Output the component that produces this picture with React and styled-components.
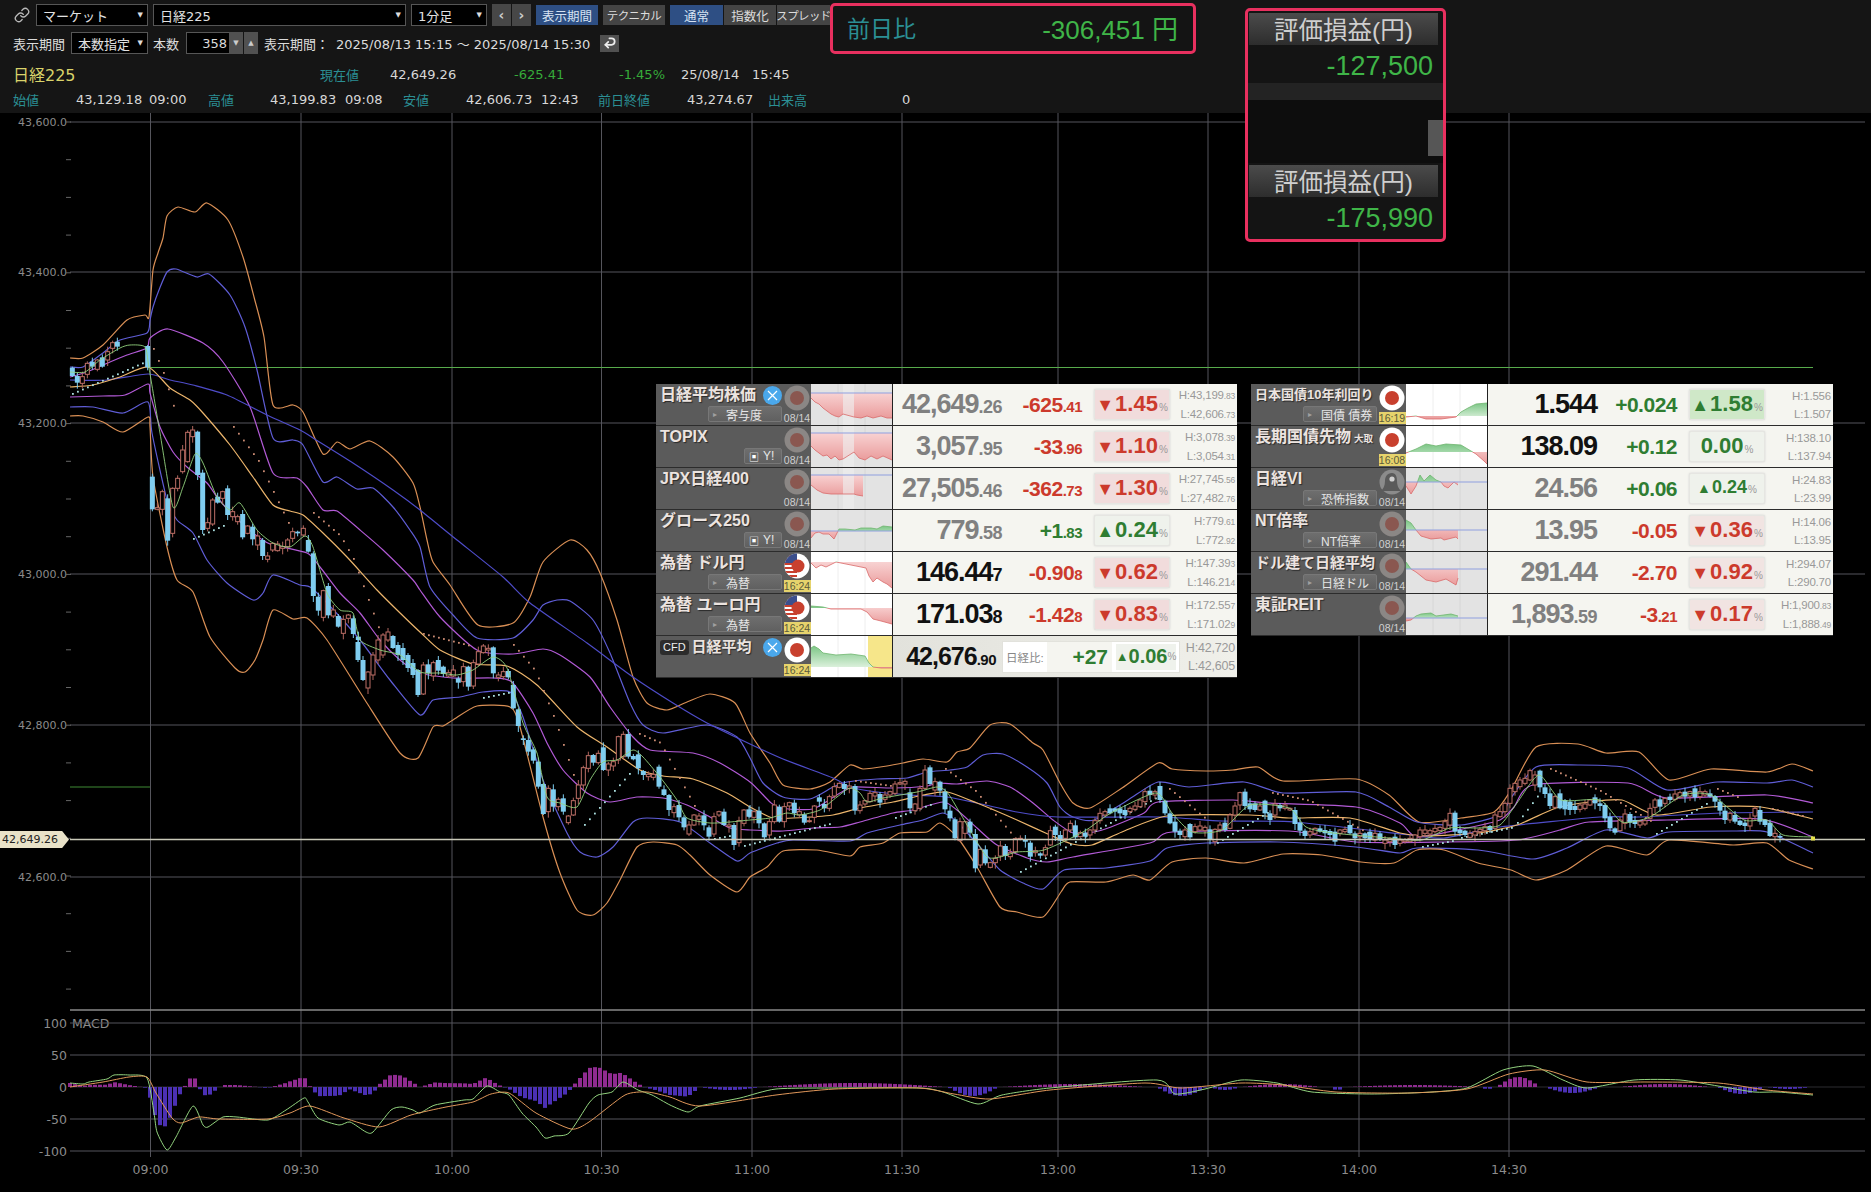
import React from 'react';
import styled, { createGlobalStyle } from 'styled-components';
import { Link as LinkIcon, Undo2 } from 'lucide-react';

const SANS = '"DejaVu Sans", "Noto Sans CJK JP", sans-serif';
const ARIAL = '"Liberation Sans", "Noto Sans CJK JP", sans-serif';

// chart data, all in page pixels
const OU = [[70,358],[83,358],[103,345],[127,320],[145,315],[149,317],[153,270],[158,253],[163,238],[167,216],[178,207],[195,212],[207,203],[228,220],[243,257],[254,297],[264,337],[273,405],[293,405],[303,412],[323,454],[337,442],[350,449],[370,441],[393,457],[413,483],[420,507],[427,540],[433,562],[450,585],[478,625],[513,623],[530,597],[543,562],[570,540],[587,550],[600,573],[617,620],[633,677],[647,703],[667,710],[687,702],[710,694],[735,703],[750,733],[770,763],[783,785],[810,789],[830,782],[850,765],[863,769],[887,766],[903,763],[923,759],[947,762],[957,752],[970,748],[990,725],[1010,724],[1033,743],[1043,750],[1060,783],[1073,803],[1090,808],[1122,788],[1158,763],[1172,769],[1206,771],[1233,770],[1258,767],[1283,781],[1356,779],[1389,795],[1419,822],[1461,818],[1494,812],[1511,790],[1536,747],[1578,744],[1606,753],[1639,752],[1669,780],[1711,769],[1767,772],[1792,764],[1813,771]];
const BU = [[70,367],[83,367],[103,353],[120,340],[147,333],[150,320],[153,307],[159,290],[167,272],[176,269],[197,277],[209,274],[230,295],[245,327],[257,370],[273,438],[293,440],[303,445],[323,482],[337,477],[357,489],[373,488],[393,507],[410,530],[420,547],[430,587],[453,615],[477,638],[513,638],[533,620],[543,605],[557,600],[570,601],[593,620],[610,653],[630,703],[643,725],[663,733],[707,725],[737,737],[750,758],[763,783],[783,797],[810,799],[833,787],[847,782],[877,779],[907,778],[927,772],[950,770],[967,767],[983,755],[1003,754],[1027,767],[1047,783],[1060,807],[1073,817],[1094,820],[1128,800],[1158,782],[1189,787],[1244,782],[1283,793],[1356,792],[1389,807],[1417,822],[1461,825],[1500,815],[1511,798],[1536,767],[1578,765],[1628,768],[1667,790],[1717,782],[1767,783],[1792,780],[1813,787]];
const PU = [[70,377],[87,372],[110,362],[127,355],[147,348],[150,338],[168,329],[203,343],[223,362],[250,407],[273,473],[297,478],[307,487],[323,510],[337,511],[360,530],[383,550],[413,580],[420,590],[440,617],[477,650],[513,654],[543,649],[560,655],[590,677],[610,707],[633,737],[650,750],[693,753],[720,763],[750,782],[770,802],[780,808],[813,809],[840,793],[853,787],[893,788],[927,786],[937,783],[957,784],[987,781],[1010,787],[1033,803],[1053,820],[1073,833],[1094,832],[1111,827],[1144,813],[1158,802],[1233,800],[1267,803],[1356,807],[1400,823],[1417,837],[1467,828],[1500,820],[1514,807],[1533,785],[1628,783],[1667,798],[1767,795],[1813,803]];
const MU = [[70,380],[107,380],[148,374],[170,380],[193,385],[227,395],[267,415],[300,430],[313,438],[353,463],[393,490],[420,510],[457,540],[503,577],[530,603],[587,643],[633,677],[673,703],[707,723],[750,744],[783,759],[833,778],[850,787],[877,792],[910,795],[947,797],[977,803],[1017,812],[1058,817],[1161,817],[1222,821],[1294,822],[1411,835],[1444,838],[1500,827],[1600,817],[1639,817],[1722,813],[1813,812]];
const OE = [[70,387],[93,385],[120,377],[148,367],[170,388],[190,400],[203,413],[230,445],[253,477],[273,505],[290,511],[303,515],[323,533],[347,557],[377,590],[397,610],[420,632],[440,650],[473,664],[507,666],[537,685],[577,727],[607,747],[640,770],[663,776],[693,779],[727,793],[750,807],[773,818],[793,818],[833,815],[860,808],[893,802],[923,795],[947,792],[977,803],[1017,820],[1050,835],[1072,844],[1092,845],[1122,832],[1167,816],[1250,815],[1289,818],[1350,818],[1400,833],[1428,836],[1478,833],[1517,825],[1556,808],[1589,802],[1622,800],[1656,815],[1711,807],[1761,807],[1813,819]];
const PL = [[70,397],[103,396],[125,395],[148,384],[150,393],[160,427],[173,452],[187,467],[207,483],[217,497],[230,512],[253,533],[270,544],[307,553],[320,567],[340,593],[360,613],[380,640],[400,660],[420,673],[453,678],[493,678],[512,682],[533,713],[547,743],[563,770],[587,793],[610,802],[637,797],[663,798],[687,805],[710,817],[730,828],[750,830],[783,831],[813,828],[840,827],[860,822],[893,813],[913,810],[943,802],[957,810],[977,828],[997,845],[1027,858],[1047,862],[1073,857],[1150,843],[1172,832],[1289,831],[1356,842],[1444,842],[1517,840],[1560,830],[1589,822],[1667,820],[1761,819],[1813,837]];
const BL = [[70,407],[93,407],[123,413],[148,402],[152,433],[167,500],[177,520],[193,533],[207,560],[227,583],[253,600],[263,593],[273,575],[300,585],[310,587],[327,603],[360,640],[390,680],[420,715],[433,700],[460,697],[483,692],[510,692],[523,717],[543,780],[567,833],[580,852],[597,857],[613,847],[633,822],[647,818],[680,822],[710,843],[737,861],[750,853],[777,843],[793,840],[850,841],[867,833],[900,825],[923,820],[943,813],[957,822],[980,847],[1000,870],[1023,883],[1043,889],[1064,870],[1106,868],[1150,861],[1167,848],[1206,843],[1278,842],[1356,847],[1400,853],[1417,848],[1478,850],[1533,859],[1567,848],[1606,830],[1647,838],[1669,832],[1733,831],[1767,832],[1813,853]];
const OL = [[70,416],[83,416],[103,422],[123,432],[148,417],[150,427],[153,477],[167,547],[177,580],[193,592],[210,637],[235,668],[245,672],[255,660],[263,640],[273,610],[293,619],[307,618],[327,640],[365,700],[400,753],[418,758],[433,727],[443,726],[453,720],[477,706],[510,707],[520,727],[543,817],[560,873],[577,910],[593,915],[607,903],[620,880],[637,847],[653,842],[677,845],[690,855],[710,875],[737,892],[750,877],[767,867],[783,851],[817,850],[850,856],[860,847],[883,843],[900,833],[927,832],[940,823],[957,837],[977,867],[1000,907],[1017,912],[1043,917],[1061,892],[1070,882],[1106,882],[1133,875],[1150,880],[1172,862],[1206,858],[1244,863],[1283,854],[1322,855],[1361,862],[1394,863],[1417,850],[1444,850],[1478,863],[1511,870],[1536,880],[1567,870],[1606,846],[1647,855],[1669,840],[1733,845],[1767,843],[1789,860],[1813,869]];
const GR = [[70,372],[85,372],[100,360],[120,348],[130,345],[145,347],[149,368],[160,433],[173,507],[183,487],[195,454],[203,463],[217,497],[230,510],[240,503],[257,530],[273,543],[290,547],[305,536],[313,547],[327,593],[340,610],[353,613],[360,640],[380,650],[400,655],[420,672],[440,673],[457,675],[473,670],[493,657],[507,668],[523,723],[537,753],[547,797],[560,803],[577,807],[590,780],[603,762],[617,760],[633,750],[643,757],[660,777],[677,800],[687,818],[710,823],[730,822],[750,820],[770,818],[787,813],[800,815],[820,810],[837,797],[850,788],[860,793],[867,802],[883,798],[917,792],[937,787],[947,792],[960,813],[973,835],[987,857],[1000,857],[1017,852],[1044,850],[1083,832],[1111,813],[1156,793],[1172,813],[1192,832],[1222,830],[1250,805],[1289,808],[1306,827],[1333,833],[1389,838],[1422,840],[1450,828],[1478,828],[1500,825],[1517,803],[1539,775],[1561,800],[1600,800],[1622,822],[1650,817],[1683,795],[1711,795],[1744,820],[1767,820],[1783,835],[1813,837]];

// [x, top, bottom, hollow] in the scale of each block below
const CANDLES_A = [[37,143,168,0],[52,168,188,0],[67,170,190,1],[82,130,163,1],[97,125,140,0],[112,120,148,1],[127,112,140,0],[143,95,120,1],[158,68,85,1],[172,65,80,0],[263,78,142,0],[277,470,568,0],[292,563,568,1],[307,515,568,1],[323,535,662,0],[338,505,640,1],[353,475,505,1],[368,390,455,1],[383,337,425,1],[398,330,350,1],[413,335,465,0],[428,458,630,0],[443,608,625,1],[458,540,612,1],[473,530,548,0],[488,515,535,1],[503,505,585,0],[518,575,590,1],[533,590,605,1],[548,582,652,0],[563,618,640,1],[578,620,658,0],[593,648,675,1],[608,660,708,0],[623,708,718,1],[638,670,690,1],[653,672,692,1],[668,680,685,1],[683,660,680,1],[698,635,655,1],[713,635,640,0],[730,625,645,1],[745,660,695,0],[760,700,828,0],[775,830,872,0],[790,812,892,1],[805,798,886,0],[820,870,888,1],[835,888,920,0],[850,898,940,1],[865,885,895,1],[880,895,942,0],[895,950,960,0]];
const CANDLES_REAL = [[358,642,660,0],[363,660,680,0],[368,672,688,1],[373,655,675,1],[378,640,660,1],[383,635,655,1],[388,632,640,1],[393,636,648,0],[398,645,655,0],[403,648,660,0],[408,655,668,0],[413,663,675,0],[418,670,695,0]];
const CANDLES_B = [[10,375,462,1],[25,373,400,0],[40,368,408,1],[55,360,392,0],[70,380,402,0],[85,398,408,1],[100,390,408,1],[115,415,428,0],[130,380,425,1],[145,380,440,0],[160,368,438,1],[175,335,372,1],[190,318,338,1],[205,325,330,1],[220,322,400,0],[235,405,412,1],[250,395,410,1],[265,393,412,0],[280,435,505,0],[295,508,558,0],[310,595,600,0],[325,600,635,0],[340,628,662,0],[355,665,740,0],[370,732,822,0],[385,745,815,1],[400,748,800,0],[415,778,800,1],[430,775,815,0],[445,828,848,1],[460,782,825,1],[475,735,775,1],[490,683,735,1],[505,647,685,1],[520,645,668,0],[535,640,668,1],[550,622,690,0],[565,672,690,1],[580,665,678,1],[595,590,660,1],[610,583,650,1],[625,582,650,0],[640,648,658,0],[655,643,685,0],[670,693,705,0],[685,703,710,1],[700,703,712,1],[717,680,740,0],[732,748,765,0],[747,765,810,0],[762,800,818,1],[777,795,832,0],[792,832,862,0],[807,855,882,1],[822,825,855,1],[837,828,838,1],[852,826,856,0],[867,862,890,0],[882,830,882,1],[897,815,825,1],[912,815,855,0],[927,855,860,1],[942,855,915,0],[957,842,908,1],[972,810,850,1],[987,808,830,0]];
const CANDLES_C = [[0,390,410,0],[12,395,412,1],[27,392,430,0],[43,430,472,0],[58,425,465,1],[73,375,425,1],[88,380,425,0],[103,380,425,1],[118,368,378,1],[133,368,400,0],[148,395,405,1],[163,403,428,0],[178,422,425,1],[193,378,412,1],[208,352,365,0],[223,372,385,0],[238,350,385,1],[253,320,348,1],[268,310,322,1],[283,312,327,0],[298,318,325,1],[315,318,392,0],[330,375,392,1],[345,362,372,1],[360,340,365,1],[375,338,348,1],[390,342,368,0],[405,345,358,1],[420,335,345,1],[435,312,340,1],[450,308,312,1],[465,304,312,1],[480,337,385,0],[495,372,392,1],[510,325,385,1],[525,270,325,1],[540,262,312,0],[555,305,330,1],[570,305,332,0],[585,335,388,0],[600,392,415,0],[615,418,475,0],[630,425,482,1],[645,425,460,1],[660,425,458,0],[676,462,565,0],[691,508,555,1],[706,508,550,0],[721,548,562,1],[736,535,548,1],[751,498,528,1],[766,498,528,0],[781,518,530,1],[796,476,515,1],[811,475,478,1],[826,480,485,0],[841,488,530,0],[856,512,518,1],[871,520,527,0],[886,503,525,1],[901,452,495,1],[916,440,465,0],[931,465,482,0],[946,450,475,1],[961,430,450,1],[976,436,472,0],[991,458,470,1],[1006,458,470,0]];
const CANDLES_D = [[162,390,405,1],[171,362,390,1],[180,340,362,1],[189,335,345,1],[198,325,340,0],[207,325,335,0],[216,325,340,0],[225,330,345,0],[234,325,335,1],[243,318,328,1],[252,300,320,1],[261,275,305,1],[270,272,285,0],[279,275,285,1],[288,258,300,0],[297,302,340,0],[306,340,370,0],[315,365,395,0],[324,392,405,0],[333,390,410,1],[342,372,412,0],[351,380,395,1],[360,378,390,1],[369,382,392,1],[378,388,418,0],[387,388,425,1],[396,375,388,1],[405,368,390,0],[414,345,385,1],[423,318,345,1],[432,278,315,1],[441,275,318,0],[450,310,328,0],[459,310,330,0],[468,318,330,1],[477,302,340,0],[486,340,360,0],[495,312,345,1],[504,315,325,0],[513,315,325,1],[522,325,330,1],[531,330,372,0],[540,368,392,0],[549,392,408,0],[558,395,405,1],[567,385,400,1],[576,385,395,0],[585,390,400,0],[594,393,405,0],[603,395,425,0],[612,390,400,1],[621,388,395,1],[630,375,400,0],[639,400,415,0],[648,400,410,1],[657,400,415,0],[666,395,420,0],[675,400,420,1],[684,400,420,0],[693,420,430,1],[702,415,425,1],[711,410,435,0],[720,420,430,1],[729,420,425,1],[738,415,425,1],[747,405,420,1],[756,390,410,1],[765,390,400,1],[774,392,402,1],[783,385,395,1],[792,382,392,1],[801,365,385,1],[810,340,375,1],[819,338,395,0],[828,390,400,0],[837,392,405,0],[846,400,412,1],[855,395,405,1],[864,388,395,1],[873,380,392,1],[882,378,390,0],[891,345,385,1],[900,335,350,1],[909,310,335,1],[918,265,310,1],[927,250,275,1],[936,240,260,1],[945,235,250,1],[954,212,240,1],[963,225,255,1],[972,212,262,0],[981,262,282,0],[990,280,318,0],[999,290,322,1],[1008,280,325,0],[1017,300,328,0],[1026,305,330,0],[1035,318,330,0],[1044,315,328,1],[1053,312,325,1],[1062,300,315,1],[1071,292,310,0],[1080,310,318,0],[1089,315,355,0],[1098,350,385,0],[1107,385,398,0],[1116,360,392,1],[1125,342,370,1],[1134,342,368,0],[1143,360,372,0],[1152,365,375,1],[1161,362,372,1],[1170,325,355,1],[1179,300,322,1],[1188,298,320,0],[1197,295,310,1],[1206,290,300,0],[1215,282,298,1],[1224,278,292,1],[1233,275,290,0],[1242,275,288,1],[1251,265,292,0],[1260,275,290,1],[1269,275,285,1],[1278,280,290,0],[1287,288,305,0],[1296,305,332,0],[1305,332,360,0],[1314,340,360,1],[1323,345,365,0],[1332,362,375,0],[1341,368,378,0],[1350,355,378,1],[1359,325,348,1],[1368,330,365,0],[1377,360,375,0],[1386,368,408,0],[1395,400,410,1],[1404,408,412,0]];

const CANDLES = [
  ...CANDLES_A.map(([x, t, b, h]) => [60 + x / 3, 320 + t / 3, 320 + b / 3, h]),
  ...CANDLES_REAL,
  ...CANDLES_B.map(([x, t, b, h]) => [420 + x / 3, 540 + t / 3, 540 + b / 3, h]),
  ...CANDLES_C.map(([x, t, b, h]) => [750 + x / 3, 680 + t / 3, 680 + b / 3, h]),
  ...CANDLES_D.map(([x, t, b, h]) => [1000 + x / 1.8, 700 + t / 3, 700 + b / 3, h]),
];

const SAR_UP = [[[72,393],[143,362]],[[193,538],[223,525]],[[483,697],[508,692]],[[584,824],[629,773]],[[714,838],[730,835]],[[744,845],[830,823]],[[895,817],[930,804]],[[1020,871],[1156,797]],[[1217,842],[1267,812]],[[1422,846],[1453,840]],[[1461,837],[1511,827]],[[1517,822],[1539,793]],[[1656,833],[1706,803]]];
const SAR_DOWN = [[[153,348],[163,372],[177,418]],[[233,426],[258,460],[288,522]],[[313,512],[340,535],[353,558],[383,640]],[[423,633],[470,645]],[[513,644],[535,670],[555,720],[574,777]],[[639,733],[660,742],[694,805]],[[855,780],[890,785]],[[945,768],[975,790],[1017,840]],[[1169,788],[1208,820]],[[1272,792],[1310,800],[1372,835]],[[1550,768],[1600,790],[1650,820]],[[1717,788],[1739,797]],[[1772,808],[1806,816]]];

const MACD = [[70,1083],[83,1084],[89,1082],[107,1079],[114,1075],[129,1075],[147,1078],[154,1113],[157,1132],[167,1150],[176,1137],[193,1106],[203,1125],[208,1127],[223,1117],[237,1117],[268,1120],[286,1110],[304,1098],[308,1102],[318,1118],[339,1125],[350,1122],[366,1132],[373,1132],[391,1110],[402,1107],[413,1110],[420,1113],[435,1105],[464,1100],[473,1099],[487,1086],[500,1092],[509,1095],[522,1113],[536,1127],[545,1138],[554,1136],[569,1133],[589,1103],[598,1095],[612,1092],[623,1082],[638,1090],[652,1095],[670,1105],[688,1112],[700,1106],[740,1098],[776,1089],[835,1088],[919,1088],[943,1092],[978,1104],[1002,1095],[1050,1088],[1157,1080],[1175,1094],[1205,1089],[1241,1080],[1277,1083],[1312,1092],[1372,1094],[1432,1092],[1467,1088],[1503,1070],[1533,1066],[1563,1080],[1587,1088],[1634,1080],[1680,1080],[1718,1086],[1754,1092],[1778,1092],[1813,1095]];
const SIGNAL = [[70,1087],[103,1082],[129,1077],[147,1077],[156,1093],[172,1118],[181,1123],[199,1117],[219,1119],[268,1119],[290,1113],[310,1106],[344,1118],[379,1127],[411,1115],[446,1107],[473,1102],[491,1094],[509,1093],[536,1113],[571,1129],[589,1122],[625,1095],[647,1092],[670,1097],[700,1106],[776,1095],[835,1089],[919,1088],[954,1094],[990,1099],[1050,1090],[1145,1083],[1181,1088],[1241,1083],[1283,1085],[1336,1092],[1408,1093],[1467,1089],[1509,1074],[1545,1070],[1587,1082],[1647,1082],[1718,1083],[1766,1090],[1813,1094]];

// histogram humps right of 11:00: [from, to, height]
const HIST_HUMPS = [[700,760,-3],[763,945,4],[948,998,-9],[1003,1145,3],[1157,1206,-9],[1210,1240,-3],[1243,1320,3],[1330,1345,-3],[1348,1480,2],[1480,1495,-2],[1497,1540,10],[1545,1600,-6],[1620,1710,3],[1718,1765,-7],[1768,1810,-2]];

const V_LINES = [
  [150.5, '09:00'], [301, '09:30'], [452, '10:00'], [601.5, '10:30'], [752, '11:00'],
  [902, '11:30'], [1058, '13:00'], [1208, '13:30'], [1359, '14:00'], [1509, '14:30'],
];
const PRICE_LINES = [[122, '43,600.0'], [272, '43,400.0'], [423, '43,200.0'], [574, '43,000.0'], [725, '42,800.0'], [877, '42,600.0']];
const MACD_LINES = [[1023, '100'], [1055, '50'], [1087, '0'], [1119, '-50'], [1151, '-100']];

function smooth(pts) {
  let d = `M${pts[0][0]} ${pts[0][1]}`;
  for (let i = 0; i < pts.length - 1; i++) {
    const p0 = pts[Math.max(0, i - 1)];
    const p1 = pts[i];
    const p2 = pts[i + 1];
    const p3 = pts[Math.min(pts.length - 1, i + 2)];
    const c1x = p1[0] + (p2[0] - p0[0]) / 9;
    const c1y = p1[1] + (p2[1] - p0[1]) / 9;
    const c2x = p2[0] - (p3[0] - p1[0]) / 9;
    const c2y = p2[1] - (p3[1] - p1[1]) / 9;
    d += `C${c1x.toFixed(1)} ${c1y.toFixed(1)} ${c2x.toFixed(1)} ${c2y.toFixed(1)} ${p2[0]} ${p2[1]}`;
  }
  return d;
}

function yAt(pts, x) {
  for (let i = 0; i < pts.length - 1; i++) {
    if (x >= pts[i][0] && x <= pts[i + 1][0]) {
      const t = (x - pts[i][0]) / (pts[i + 1][0] - pts[i][0] || 1);
      return pts[i][1] + (pts[i + 1][1] - pts[i][1]) * t;
    }
  }
  return pts[pts.length - 1][1];
}

function dotsOf(series) {
  const out = [];
  series.forEach((pts) => {
    for (let x = pts[0][0]; x <= pts[pts.length - 1][0]; x += 5) out.push([x, yAt(pts, x)]);
  });
  return out;
}

function histAt(x) {
  if (x < 700) return yAt(SIGNAL, x) - yAt(MACD, x);
  const hump = HIST_HUMPS.find(([a, b]) => x >= a && x <= b);
  if (!hump) return 0;
  const t = (x - hump[0]) / (hump[1] - hump[0]);
  return hump[2] * Math.sin(Math.PI * t);
}

const HIST = [];
for (let x = 70; x <= 1810; x += 5) HIST.push([x, histAt(x)]);

const GlobalStyle = createGlobalStyle`
  html, body { margin: 0; padding: 0; background: #000; }
  body { font-family: ${SANS}; }
`;

const Page = styled.div`
  position: relative;
  width: 1871px;
  height: 1192px;
  overflow: hidden;
  background: #000;
`;

const Header = styled.header`
  height: 113px;
  box-sizing: border-box;
  padding: 4px 0 0 13px;
  background: #151515;
  color: #dcdcdc;
  font-size: 13px;
`;

const ControlRow = styled.div`
  display: flex;
  align-items: center;
  gap: 5px;
  height: 22px;
  margin-bottom: ${(p) => p.$mb || 0}px;
`;

const LinkBox = styled.div`
  width: 18px;
  display: flex;
  justify-content: center;
  color: #b9b9b9;
`;

const Select = styled.div`
  width: ${(p) => p.$w}px;
  height: 22px;
  box-sizing: border-box;
  display: flex;
  align-items: center;
  justify-content: space-between;
  padding: 0 4px 0 6px;
  background: #000;
  border: 1px solid #565656;
  color: #e2e2e2;
  white-space: nowrap;
  font-size: 13px;
  &::after {
    content: '▼';
    font-size: 7px;
    color: #ddd;
  }
`;

const ArrowGroup = styled.div`
  display: flex;
  gap: 1px;
  width: 39px;
`;

const ArrowButton = styled.div`
  flex: 1;
  height: 22px;
  display: flex;
  align-items: center;
  justify-content: center;
  background: #474747;
  color: #ccc;
  font-size: 14px;
  font-weight: bold;
`;

const TabButton = styled.div`
  width: ${(p) => p.$w}px;
  height: 20px;
  display: flex;
  align-items: center;
  justify-content: center;
  background: ${(p) => (p.$on ? '#2e4f84' : '#444')};
  color: ${(p) => (p.$on ? '#d6e2f2' : '#dcdcdc')};
  font-size: ${(p) => (p.$tight ? 11.5 : 12.5)}px;
  letter-spacing: ${(p) => (p.$tight ? -0.6 : 0)}px;
  white-space: nowrap;
`;

const TabGroup = styled.div`
  display: flex;
  gap: 1px;
`;

const Label = styled.div`
  width: ${(p) => p.$w}px;
  white-space: nowrap;
  font-size: 13px;
`;

const SpinGroup = styled.div`
  display: flex;
  width: 73px;
`;

const NumberBox = styled.div`
  width: 43px;
  height: 22px;
  box-sizing: border-box;
  padding-right: 2px;
  display: flex;
  align-items: center;
  justify-content: flex-end;
  background: #000;
  border: 1px solid #565656;
  border-right: none;
`;

const SpinButton = styled.div`
  width: 14px;
  margin-right: 1px;
  height: 22px;
  display: flex;
  align-items: center;
  justify-content: center;
  background: #515151;
  color: #ccc;
  font-size: 7px;
`;

const ReloadButton = styled.div`
  width: 19px;
  height: 17px;
  display: flex;
  align-items: center;
  justify-content: center;
  background: #505050;
  color: #eee;
  svg { transform: scaleY(-1); }
`;

const InfoRow = styled.div`
  display: flex;
  align-items: center;
  height: ${(p) => p.$h}px;
  margin-top: ${(p) => p.$mt || 0}px;
`;

const InfoCell = styled.div`
  width: ${(p) => p.$w || 'auto'}${(p) => (p.$w ? 'px' : '')};
  flex: none;
  white-space: nowrap;
  font-size: ${(p) => p.$size || 13}px;
  color: ${(p) => (p.$tone === 'teal' ? '#2b8f94' : p.$tone === 'green' ? '#36ab3a' : p.$tone === 'gold' ? '#d9d36a' : '#d8d8d8')};
`;

const Svg = styled.svg`
  display: block;
`;

const AxisText = styled.text`
  font-family: ${SANS};
  font-size: ${(p) => p.$size || 11}px;
  fill: #8b8b8b;
`;

const PricePill = styled.div`
  position: absolute;
  left: 0;
  top: 831px;
  width: 69px;
  height: 17px;
  padding-left: 2px;
  box-sizing: border-box;
  display: flex;
  align-items: center;
  background: #e9e2c8;
  clip-path: polygon(0 0, 90% 0, 100% 50%, 90% 100%, 0 100%);
  color: #222;
  font-size: 11px;
`;

const PinkBox = styled.div`
  position: absolute;
  left: ${(p) => p.$left}px;
  top: ${(p) => p.$top}px;
  width: ${(p) => p.$w}px;
  height: ${(p) => p.$h}px;
  box-sizing: border-box;
  border: 3px solid #e8305f;
  border-radius: 5px;
  background: #141414;
`;

const DiffRow = styled.div`
  height: 100%;
  display: flex;
  align-items: center;
  justify-content: space-between;
  padding: 0 15px 3px 14px;
  box-sizing: border-box;
`;

const DiffLabel = styled.span`
  color: #2b8f94;
  font-family: ${ARIAL};
  font-size: 23px;
`;

const BigGreen = styled.span`
  color: #3fb548;
  font-family: ${ARIAL};
  font-size: ${(p) => p.$size || 26}px;
`;

const BoxHead = styled.div`
  height: 32px;
  margin: 2px 5px 0 1px;
  padding-bottom: 2px;
  box-sizing: border-box;
  display: flex;
  align-items: center;
  justify-content: center;
  background: linear-gradient(#4b4b4b, #2d2d2d);
  color: #cfcfcf;
  font-family: ${ARIAL};
  font-size: 24.5px;
  white-space: nowrap;
`;

const BoxValue = styled.div`
  height: 38px;
  box-sizing: border-box;
  padding: 5px 10px 0 0;
  display: flex;
  align-items: center;
  justify-content: flex-end;
`;

const BoxStrip = styled.div`
  height: 17px;
  background: #232323;
`;

const BoxTrack = styled.div`
  height: 63px;
  box-sizing: border-box;
  padding-top: 12px;
  display: flex;
  justify-content: flex-end;
  align-items: center;
  background: #0d0d0d;
`;

const BoxThumb = styled.div`
  width: 15px;
  height: 36px;
  background: #565656;
`;

const Panel = styled.div`
  position: absolute;
  left: ${(p) => p.$left}px;
  top: 384px;
  width: ${(p) => p.$w}px;
  background: #222;
`;

const Row = styled.div`
  display: flex;
  height: 42px;
  box-sizing: border-box;
  border-bottom: 1px solid #2c2c2c;
`;

const LabelCell = styled.div`
  width: 155px;
  flex: none;
  display: flex;
  background: #5b5b5b;
`;

const LabelMain = styled.div`
  width: 127px;
  flex: none;
  box-sizing: border-box;
  padding: 1px 1px 0 4px;
  display: flex;
  flex-direction: column;
  justify-content: space-between;
`;

const TitleRow = styled.div`
  display: flex;
  align-items: flex-start;
  justify-content: space-between;
  height: 22px;
`;

const Title = styled.div`
  font-family: ${ARIAL};
  font-weight: bold;
  font-size: ${(p) => p.$size || 16}px;
  line-height: 20px;
  color: #ece4e0;
  text-shadow: 1px 1px 1px #2a2a2a;
  white-space: nowrap;
  small {
    font-size: 9.5px;
    margin-left: 3px;
  }
`;

const CfdTag = styled.span`
  display: inline-block;
  background: #2c2c2c;
  border-radius: 3px;
  padding: 0 3px;
  margin-right: 3px;
  font-size: 11px;
  line-height: 15px;
  font-weight: normal;
  color: #eee;
  vertical-align: 1px;
`;

const XBadge = styled.div`
  width: 19px;
  height: 19px;
  margin: 1px 0 0 0;
  flex: none;
  border-radius: 50%;
  background: #4aa8ec;
  display: flex;
  align-items: center;
  justify-content: center;
`;

const SubButton = styled.div`
  align-self: flex-end;
  width: ${(p) => p.$w || 74}px;
  height: 16px;
  margin-bottom: 3px;
  box-sizing: border-box;
  display: flex;
  align-items: center;
  padding-left: 4px;
  gap: ${(p) => (p.$y ? 4 : 9)}px;
  background: linear-gradient(#6e6e6e, #606060);
  border: 1px solid #777;
  border-radius: 2px;
  color: #e6e6e6;
  font-family: ${ARIAL};
  font-size: 12px;
  white-space: nowrap;
  &::before {
    content: '${(p) => (p.$y ? '▣' : '▸')}';
    font-size: ${(p) => (p.$y ? 10 : 8)}px;
    color: ${(p) => (p.$y ? '#fff' : '#a0a0a0')};
  }
`;

const IconCol = styled.div`
  flex: 1;
  display: flex;
  flex-direction: column;
  align-items: center;
  padding-top: 1px;
`;

const Stamp = styled.div`
  width: 27px;
  height: ${(p) => (p.$live ? 12 : 11)}px;
  line-height: 12px;
  margin-top: 1px;
  text-align: center;
  font-family: ${ARIAL};
  font-size: 10.5px;
  background: ${(p) => (p.$live ? '#e6d36c' : 'transparent')};
  color: ${(p) => (p.$live ? '#5a5a3a' : '#d0d0d0')};
`;

const SparkBox = styled.div`
  width: 81px;
  flex: none;
  background: ${(p) => (p.$stale ? '#e3e3e3' : '#fff')};
  svg { display: block; }
`;

const DataCell = styled.div`
  flex: 1;
  margin-left: 1px;
  display: grid;
  grid-template-columns: 109px 80px 88px 1fr;
  align-items: center;
  background: #f5f5f0;
  font-family: ${ARIAL};
  font-weight: bold;
`;

const CfdData = styled.div`
  flex: 1;
  margin-left: 1px;
  display: grid;
  grid-template-columns: 109px 178px 1fr;
  align-items: center;
  background: linear-gradient(90deg, #e2e2dc, #f0f0ea);
  font-family: ${ARIAL};
  font-weight: bold;
`;

const Price = styled.div`
  text-align: right;
  padding-right: ${(p) => p.$pr || 0}px;
  color: ${(p) => (p.$stale ? '#808080' : '#111')};
  font-size: ${(p) => p.$size || 27}px;
  letter-spacing: -1px;
  white-space: nowrap;
  small {
    font-size: ${(p) => (p.$size ? 15 : 18)}px;
    letter-spacing: -0.5px;
  }
`;

const Change = styled.div`
  text-align: right;
  color: ${(p) => (p.$up ? '#2f7d32' : '#cc3a2c')};
  font-size: 21px;
  letter-spacing: -0.5px;
  white-space: nowrap;
  small {
    font-size: 15px;
  }
`;

const Badge = styled.div`
  justify-self: end;
  width: 76px;
  height: 31px;
  box-sizing: border-box;
  display: flex;
  align-items: baseline;
  justify-content: center;
  background: ${(p) => p.$bg};
  border: 1px solid #e6e6e2;
  border-radius: 2px;
  box-shadow: 0 0 2px #ccc;
  color: ${(p) => (p.$up ? '#2f7d32' : '#cc3a2c')};
  font-size: ${(p) => (p.$small ? 18 : 22)}px;
  line-height: 27px;
  white-space: nowrap;
  i {
    font-style: normal;
    font-size: ${(p) => (p.$small ? 14 : 18)}px;
    margin-right: 1px;
  }
  small {
    font-size: 10px;
    font-weight: normal;
    color: #999;
    margin-left: 1px;
  }
`;

const HighLow = styled.div`
  text-align: right;
  padding-right: 2px;
  color: #999;
  font-weight: normal;
  font-size: ${(p) => p.$size || 11.5}px;
  line-height: 18px;
  letter-spacing: -0.2px;
  white-space: nowrap;
  small {
    font-size: 8.5px;
  }
`;

const CfdBox = styled.div`
  height: 32px;
  box-sizing: border-box;
  display: flex;
  align-items: center;
  padding: 0 3px 0 3px;
  background: #fff;
  border: 1px solid #e2e2dc;
`;

const CfdLabel = styled.span`
  width: 41px;
  color: #888;
  font-weight: normal;
  font-size: 11.5px;
  white-space: nowrap;
`;

const CfdChange = styled.span`
  flex: 1;
  text-align: right;
  padding: 3px 4px 3px 0;
  background: #f5f5f0;
  color: #2f7d32;
  font-size: 21px;
  margin-right: 4px;
`;

const CfdBadge = styled.span`
  width: 60px;
  height: 26px;
  display: flex;
  align-items: center;
  justify-content: center;
  background: #eff2ec;
  color: #2f7d32;
  font-size: 20px;
  i { font-style: normal; font-size: 13px; }
  small { font-size: 10px; font-weight: normal; color: #999; }
`;

const LEFT_ROWS = [
  { title: '日経平均株価', x: true, sub: '寄与度', stamp: '08/14', stale: true, price: ['42,649', '.26'], change: ['-625', '.41'], pct: '1.45', bg: '#f1dcdc', h: ['43,199', '.83'], l: ['42,606', '.73'],
    spark: { base: 9, gap: true, pts: [[0,14],[4,18],[8,20],[12,24],[16,27],[20,30],[24,32],[28,33],[32,30],[43,33],[50,34],[56,32],[62,34],[70,32],[76,34],[81,34]] } },
  { title: 'TOPIX', y: true, stamp: '08/14', stale: true, price: ['3,057', '.95'], change: ['-33', '.96'], pct: '1.10', bg: '#f1dcdc', h: ['3,078', '.39'], l: ['3,054', '.31'],
    spark: { base: 7, gap: true, pts: [[0,20],[4,24],[8,27],[12,30],[16,29],[20,33],[24,30],[28,34],[32,33],[43,26],[48,32],[54,34],[60,30],[66,33],[72,30],[81,34]] } },
  { title: 'JPX日経400', stamp: '08/14', stale: true, price: ['27,505', '.46'], change: ['-362', '.73'], pct: '1.30', bg: '#f1dcdc', h: ['27,745', '.56'], l: ['27,482', '.76'],
    spark: { base: 7, gap: true, pts: [[0,17],[6,22],[12,25],[20,26],[32,26],[43,26],[46,27],[52,28]] } },
  { title: 'グロース250', y: true, stamp: '08/14', stale: true, price: ['779', '.58'], change: ['+1', '.83'], up: true, pct: '0.24', bg: '#eff2ec', h: ['779', '.61'], l: ['772', '.92'],
    spark: { base: 21, pts: [[0,28],[4,23],[8,22],[12,24],[18,24],[23,29],[28,19],[34,19],[44,20],[50,18],[60,18],[66,19],[72,16],[81,17]] } },
  { title: '為替 ドル円', flag: true, sub: '為替', stamp: '16:24', price: ['146.44', '7'], change: ['-0.90', '8'], pct: '0.62', bg: '#f1dcdc', h: ['147.39', '3'], l: ['146.21', '4'],
    spark: { base: 10, pts: [[0,11],[5,16],[10,13],[15,15],[25,10],[35,12],[45,14],[55,16],[58,24],[62,30],[66,26],[72,30],[76,32],[81,36]] } },
  { title: '為替 ユーロ円', flag: true, sub: '為替', stamp: '16:24', price: ['171.03', '8'], change: ['-1.42', '8'], pct: '0.83', bg: '#f1dcdc', h: ['172.55', '7'], l: ['171.02', '9'],
    spark: { base: 14, pts: [[0,12],[12,13],[20,15],[35,15],[50,15],[56,18],[62,25],[70,27],[81,30]] } },
];

const RIGHT_ROWS = [
  { title: '日本国債10年利回り', size: 13, sub: '国債 債券', live: true, stamp: '16:19', price: ['1.544'], change: ['+0.024'], up: true, pct: '1.58', bg: '#cfe8c8', h: ['1.556'], l: ['1.507'],
    spark: { base: 32, pts: [[0,33],[10,32],[20,35],[35,35],[50,33],[55,28],[62,24],[70,20],[81,19]] } },
  { title: '長期国債先物', extra: '大取', live: true, stamp: '16:08', price: ['138.09'], change: ['+0.12'], up: true, pct: '0.00', flat: true, bg: '#eff2ec', h: ['138.10'], l: ['137.94'],
    spark: { base: 26, pts: [[0,27],[10,23],[20,18],[30,20],[40,18],[55,19],[65,25],[70,28],[78,35],[81,38]] } },
  { title: '日経VI', reaper: true, sub: '恐怖指数', stamp: '08/14', stale: true, price: ['24.56'], change: ['+0.06'], up: true, pct: '0.24', small: true, bg: '#eff2ec', h: ['24.83'], l: ['23.99'],
    spark: { base: 14, pts: [[0,18],[5,26],[10,18],[14,7],[18,13],[24,7],[30,12],[35,14],[38,18],[42,20],[48,14],[52,17]] } },
  { title: 'NT倍率', sub: 'NT倍率', stamp: '08/14', stale: true, price: ['13.95'], change: ['-0.05'], pct: '0.36', bg: '#f1e4e2', h: ['14.06'], l: ['13.95'],
    spark: { base: 20, pts: [[0,10],[5,13],[10,20],[15,26],[25,29],[35,28],[38,30],[50,27],[52,29]] } },
  { title: 'ドル建て日経平均', size: 15, sub: '日経ドル', stamp: '08/14', stale: true, price: ['291.44'], change: ['-2.70'], pct: '0.92', bg: '#f1e4e2', h: ['294.07'], l: ['290.70'],
    spark: { base: 17, pts: [[0,10],[5,17],[10,20],[20,28],[30,30],[40,27],[45,30],[50,33],[52,26]] } },
  { title: '東証REIT', stamp: '08/14', stale: true, price: ['1,893', '.59'], change: ['-3', '.21'], pct: '0.17', bg: '#f1e4e2', h: ['1,900', '.83'], l: ['1,888', '.49'],
    spark: { base: 24, pts: [[0,27],[5,26],[10,22],[15,20],[25,19],[30,22],[45,20],[52,22]] } },
];

const Sparkline = ({ id, spark, stale, tint }) => {
  const { base, pts, gap } = spark;
  const line = pts.map((p) => p.join(',')).join(' ');
  const first = pts[0][0];
  const last = pts[pts.length - 1][0];
  const area = `${first},${base} ${line} ${last},${base}`;
  return (
    <SparkBox $stale={stale}>
      <svg width="81" height="41" viewBox="0 0 81 41">
        <defs>
          <linearGradient id={`${id}-r`} x1="0" y1="0" x2="0" y2="1">
            <stop offset="0" stopColor="#f8d2d2" />
            <stop offset="1" stopColor="#ea9c9c" />
          </linearGradient>
          <linearGradient id={`${id}-g`} x1="0" y1="0" x2="0" y2="1">
            <stop offset="0" stopColor="#7cc686" />
            <stop offset="1" stopColor="#dff2df" />
          </linearGradient>
          <clipPath id={`${id}-a`}><rect x="0" y="0" width="81" height={base} /></clipPath>
          <clipPath id={`${id}-b`}><rect x="0" y={base} width="81" height={41 - base} /></clipPath>
        </defs>
        {[27, 54].map((x) => <line key={x} x1={x} x2={x} y1="0" y2="41" stroke={stale ? '#d6d6d6' : '#eeeeee'} />)}
        {tint && <rect x="57" y="0" width="24" height="41" fill="#f6e68a" />}
        <polygon points={area} fill={`url(#${id}-g)`} clipPath={`url(#${id}-a)`} />
        <polygon points={area} fill={`url(#${id}-r)`} clipPath={`url(#${id}-b)`} />
        {gap && <rect x="32" y="0" width="11" height="41" fill="#eee" opacity="0.65" />}
        <polyline points={line} fill="none" stroke="#6fb56f" strokeWidth="0.8" clipPath={`url(#${id}-a)`} />
        <polyline points={line} fill="none" stroke="#d96a6a" strokeWidth="0.8" clipPath={`url(#${id}-b)`} />
        {stale && <line x1="0" x2="81" y1={base} y2={base} stroke="#8f9fe0" strokeWidth="1.2" />}
      </svg>
    </SparkBox>
  );
};

const StatusDot = ({ stale }) => (
  <svg width="26" height="26" viewBox="0 0 26 26">
    <circle cx="13" cy="13" r="12.5" fill={stale ? '#8b8785' : '#fff'} />
    <circle cx="13" cy="13" r="7" fill={stale ? '#8a5750' : '#c8402e'} />
  </svg>
);

const FlagDot = ({ id }) => (
  <svg width="26" height="26" viewBox="0 0 26 26">
    <defs>
      <clipPath id={`${id}-flag`}><circle cx="13" cy="13" r="12.5" /></clipPath>
    </defs>
    <g clipPath={`url(#${id}-flag)`}>
      <rect width="26" height="26" fill="#fff" />
      {[2, 6, 10, 14, 18, 22].map((y) => <rect key={y} x="0" y={y} width="13" height="2" fill="#c8402e" />)}
      <rect x="0" y="0" width="13" height="10" fill="#3c4f8c" />
      <circle cx="14" cy="13" r="6.5" fill="#c8402e" />
    </g>
  </svg>
);

const ReaperDot = () => (
  <svg width="26" height="26" viewBox="0 0 26 26">
    <circle cx="13" cy="13" r="12.5" fill="#8b8b8b" />
    <path d="M13 4c-5 0-7 4-7 8 0 5-2 8-4 10h20c-3-3-4-6-4-10 0-4-1-8-5-8z" fill="#5a5a5a" />
    <circle cx="13" cy="10" r="2.6" fill="#cfcfcf" />
  </svg>
);

const XMark = () => (
  <svg width="11" height="11" viewBox="0 0 11 11">
    <path d="M1 1l9 9M10 1L1 10" stroke="#fff" strokeWidth="1.2" />
  </svg>
);

const split = (v) => <>{v[0]}{v[1] && <small>{v[1]}</small>}</>;

const QuoteRow = ({ row, id }) => {
  const live = !row.stale;
  return (
    <Row>
      <LabelCell>
        <LabelMain>
          <TitleRow>
            <Title $size={row.size}>{row.title}{row.extra && <small>{row.extra}</small>}</Title>
            {row.x && <XBadge><XMark /></XBadge>}
          </TitleRow>
          {row.sub && <SubButton>{row.sub}</SubButton>}
          {row.y && <SubButton $y $w={38}>Y!</SubButton>}
        </LabelMain>
        <IconCol>
          {row.flag ? <FlagDot id={id} /> : row.reaper ? <ReaperDot /> : <StatusDot stale={row.stale} />}
          <Stamp $live={live}>{row.stamp}</Stamp>
        </IconCol>
      </LabelCell>
      <Sparkline id={id} spark={row.spark} stale={row.stale} />
      <DataCell>
        <Price $stale={row.stale}>{split(row.price)}</Price>
        <Change $up={row.up}>{split(row.change)}</Change>
        <Badge $up={row.up} $small={row.small} $bg={row.bg}>
          {!row.flat && <i>{row.up ? '▲' : '▼'}</i>}{row.pct}<small>%</small>
        </Badge>
        <HighLow>
          <div>H:{split(row.h)}</div>
          <div>L:{split(row.l)}</div>
        </HighLow>
      </DataCell>
    </Row>
  );
};

const CfdRow = () => (
  <Row>
    <LabelCell>
      <LabelMain>
        <TitleRow>
          <Title $size={15}><CfdTag>CFD</CfdTag>日経平均</Title>
          <XBadge><XMark /></XBadge>
        </TitleRow>
      </LabelMain>
      <IconCol>
        <StatusDot />
        <Stamp $live>16:24</Stamp>
      </IconCol>
    </LabelCell>
    <Sparkline id="cfd" tint spark={{ base: 31, pts: [[0,12],[3,10],[8,13],[12,17],[25,19],[40,18],[54,20],[58,27],[62,31],[70,32],[81,32]] }} />
    <CfdData>
      <Price $size={25} $pr={6}>42,676<small>.90</small></Price>
      <CfdBox>
        <CfdLabel>日経比:</CfdLabel>
        <CfdChange>+27</CfdChange>
        <CfdBadge><i>▲</i>0.06<small>%</small></CfdBadge>
      </CfdBox>
      <HighLow $size={12.5}>
        <div>H:42,720</div>
        <div>L:42,605</div>
      </HighLow>
    </CfdData>
  </Row>
);

const Band = ({ pts, color, w }) => <path d={smooth(pts)} fill="none" stroke={color} strokeWidth={w || 1.2} />;

const Chart = () => (
  <Svg width="1871" height="1079" viewBox="0 113 1871 1079">
    {V_LINES.map(([x, label]) => (
      <g key={label}>
        <line x1={x} x2={x} y1="113" y2="1157" stroke="#55555c" />
        <AxisText x={x} y="1174" textAnchor="middle" $size={12.5}>{label}</AxisText>
      </g>
    ))}
    {PRICE_LINES.map(([y, label]) => (
      <g key={label}>
        <line x1="70" x2="1865" y1={y} y2={y} stroke="#55555c" />
        <AxisText x="67" y={y + 4} textAnchor="end">{label}</AxisText>
      </g>
    ))}
    {Array.from({ length: 24 }, (_, i) => 122 + i * 37.7).map((y) => (
      <line key={y} x1="66" x2="71" y1={y} y2={y} stroke="#666" />
    ))}
    <line x1="70" x2="150" y1="787" y2="787" stroke="#3f8a35" />
    <line x1="148" x2="1813" y1="367.5" y2="367.5" stroke="#58ab4c" />

    <Band pts={OU} color="#d98f55" />
    <Band pts={BU} color="#5f5dd6" />
    <Band pts={PU} color="#b25ad6" />
    <Band pts={MU} color="#4e4cc8" />
    <Band pts={PL} color="#b25ad6" />
    <Band pts={BL} color="#5f5dd6" />
    <Band pts={OL} color="#d98f55" />
    <Band pts={OE} color="#ecb56c" />

    {dotsOf(SAR_UP).map(([x, y]) => <rect key={`u${x}`} x={x} y={y} width="1.8" height="1.8" fill="#a9dcdc" />)}
    {dotsOf(SAR_DOWN).map(([x, y]) => <rect key={`d${x}`} x={x} y={y} width="1.8" height="1.8" fill="#c98a72" />)}

    {CANDLES.map(([x, top, bot, hollow], i) => {
      const up = 1 + ((i * 7) % 5);
      const down = 1 + ((i * 11) % 6);
      return (
        <g key={i}>
          <line x1={x} x2={x} y1={top - up} y2={bot + down} stroke={hollow ? '#b0665e' : '#7fcdf0'} />
          {hollow
            ? <rect x={x - 2} y={top} width="4" height={Math.max(bot - top, 1)} fill="#000" stroke="#bd6f66" />
            : <rect x={x - 2.5} y={top} width="5" height={Math.max(bot - top, 1.5)} fill="#7fcdf0" />}
        </g>
      );
    })}
    <Band pts={GR} color="#93d47f" w={0.9} />
    <line x1="70" x2="1865" y1="839.5" y2="839.5" stroke="#c9c9b9" strokeWidth="1.5" />
    <rect x="1811" y="836.5" width="4" height="4" fill="#e4e04a" />

    <line x1="70" x2="1865" y1="1010" y2="1010" stroke="#8a8a8a" strokeWidth="1.3" />
    <AxisText x="72" y="1028" $size={12.5}>MACD</AxisText>
    {MACD_LINES.map(([y, label]) => (
      <g key={label}>
        <line x1="70" x2="1865" y1={y} y2={y} stroke={label === '0' ? '#2c2c30' : '#55555c'} />
        <AxisText x="67" y={y + 5} textAnchor="end" $size={12.5}>{label}</AxisText>
      </g>
    ))}
    {HIST.map(([x, h]) => (
      <rect key={x} x={x - 2} y={h > 0 ? 1087 - h : 1087} width="4" height={Math.abs(h)} fill={h > 0 ? '#8f2b90' : '#4b30b4'} />
    ))}
    <Band pts={MACD} color="#93d47f" w={1} />
    <Band pts={SIGNAL} color="#e0975a" w={1} />
  </Svg>
);

const App = () => (
  <Page>
    <GlobalStyle />
    <Header>
      <ControlRow $mb={6}>
        <LinkBox><LinkIcon size={16} /></LinkBox>
        <Select $w={112}>マーケット</Select>
        <Select $w={253}>日経225</Select>
        <Select $w={76}>1分足</Select>
        <ArrowGroup>
          <ArrowButton>‹</ArrowButton>
          <ArrowButton>›</ArrowButton>
        </ArrowGroup>
        <TabButton $on $w={62}>表示期間</TabButton>
        <TabButton $w={62} $tight>テクニカル</TabButton>
        <TabGroup>
          <TabButton $on $w={53}>通常</TabButton>
          <TabButton $w={52}>指数化</TabButton>
          <TabButton $w={53} $tight>スプレッド</TabButton>
        </TabGroup>
      </ControlRow>
      <ControlRow>
        <Label $w={53}>表示期間</Label>
        <Select $w={77}>本数指定</Select>
        <Label $w={28}>本数</Label>
        <SpinGroup>
          <NumberBox>358</NumberBox>
          <SpinButton>▼</SpinButton>
          <SpinButton>▲</SpinButton>
        </SpinGroup>
        <Label $w={67}>表示期間：</Label>
        <Label $w={259}>2025/08/13 15:15 ～ 2025/08/14 15:30</Label>
        <ReloadButton><Undo2 size={14} strokeWidth={3} /></ReloadButton>
      </ControlRow>
      <InfoRow $h={24} $mt={8}>
        <InfoCell $w={307} $size={16} $tone="gold">日経225</InfoCell>
        <InfoCell $w={70} $tone="teal">現在値</InfoCell>
        <InfoCell $w={124}>42,649.26</InfoCell>
        <InfoCell $w={105} $tone="green">-625.41</InfoCell>
        <InfoCell $w={62} $tone="green">-1.45%</InfoCell>
        <InfoCell $w={71}>25/08/14</InfoCell>
        <InfoCell>15:45</InfoCell>
      </InfoRow>
      <InfoRow $h={22} $mt={2}>
        <InfoCell $w={63} $tone="teal">始値</InfoCell>
        <InfoCell $w={73}>43,129.18</InfoCell>
        <InfoCell $w={59}>09:00</InfoCell>
        <InfoCell $w={62} $tone="teal">高値</InfoCell>
        <InfoCell $w={75}>43,199.83</InfoCell>
        <InfoCell $w={58}>09:08</InfoCell>
        <InfoCell $w={63} $tone="teal">安値</InfoCell>
        <InfoCell $w={75}>42,606.73</InfoCell>
        <InfoCell $w={57}>12:43</InfoCell>
        <InfoCell $w={89} $tone="teal">前日終値</InfoCell>
        <InfoCell $w={81}>43,274.67</InfoCell>
        <InfoCell $w={134} $tone="teal">出来高</InfoCell>
        <InfoCell>0</InfoCell>
      </InfoRow>
    </Header>
    <Chart />

    <PricePill>42,649.26</PricePill>

    <PinkBox $left={830} $top={3} $w={366} $h={51}>
      <DiffRow>
        <DiffLabel>前日比</DiffLabel>
        <BigGreen>-306,451 円</BigGreen>
      </DiffRow>
    </PinkBox>

    <PinkBox $left={1245} $top={8} $w={201} $h={234}>
      <BoxHead>評価損益(円)</BoxHead>
      <BoxValue><BigGreen $size={27}>-127,500</BigGreen></BoxValue>
      <BoxStrip />
      <BoxTrack><BoxThumb /></BoxTrack>
      <BoxHead>評価損益(円)</BoxHead>
      <BoxValue><BigGreen $size={27}>-175,990</BigGreen></BoxValue>
    </PinkBox>

    <Panel $left={656} $w={581}>
      {LEFT_ROWS.map((row, i) => <QuoteRow key={row.title} row={row} id={`l${i}`} />)}
      <CfdRow />
    </Panel>
    <Panel $left={1251} $w={582}>
      {RIGHT_ROWS.map((row, i) => <QuoteRow key={row.title} row={row} id={`r${i}`} />)}
    </Panel>
  </Page>
);

export default App;
